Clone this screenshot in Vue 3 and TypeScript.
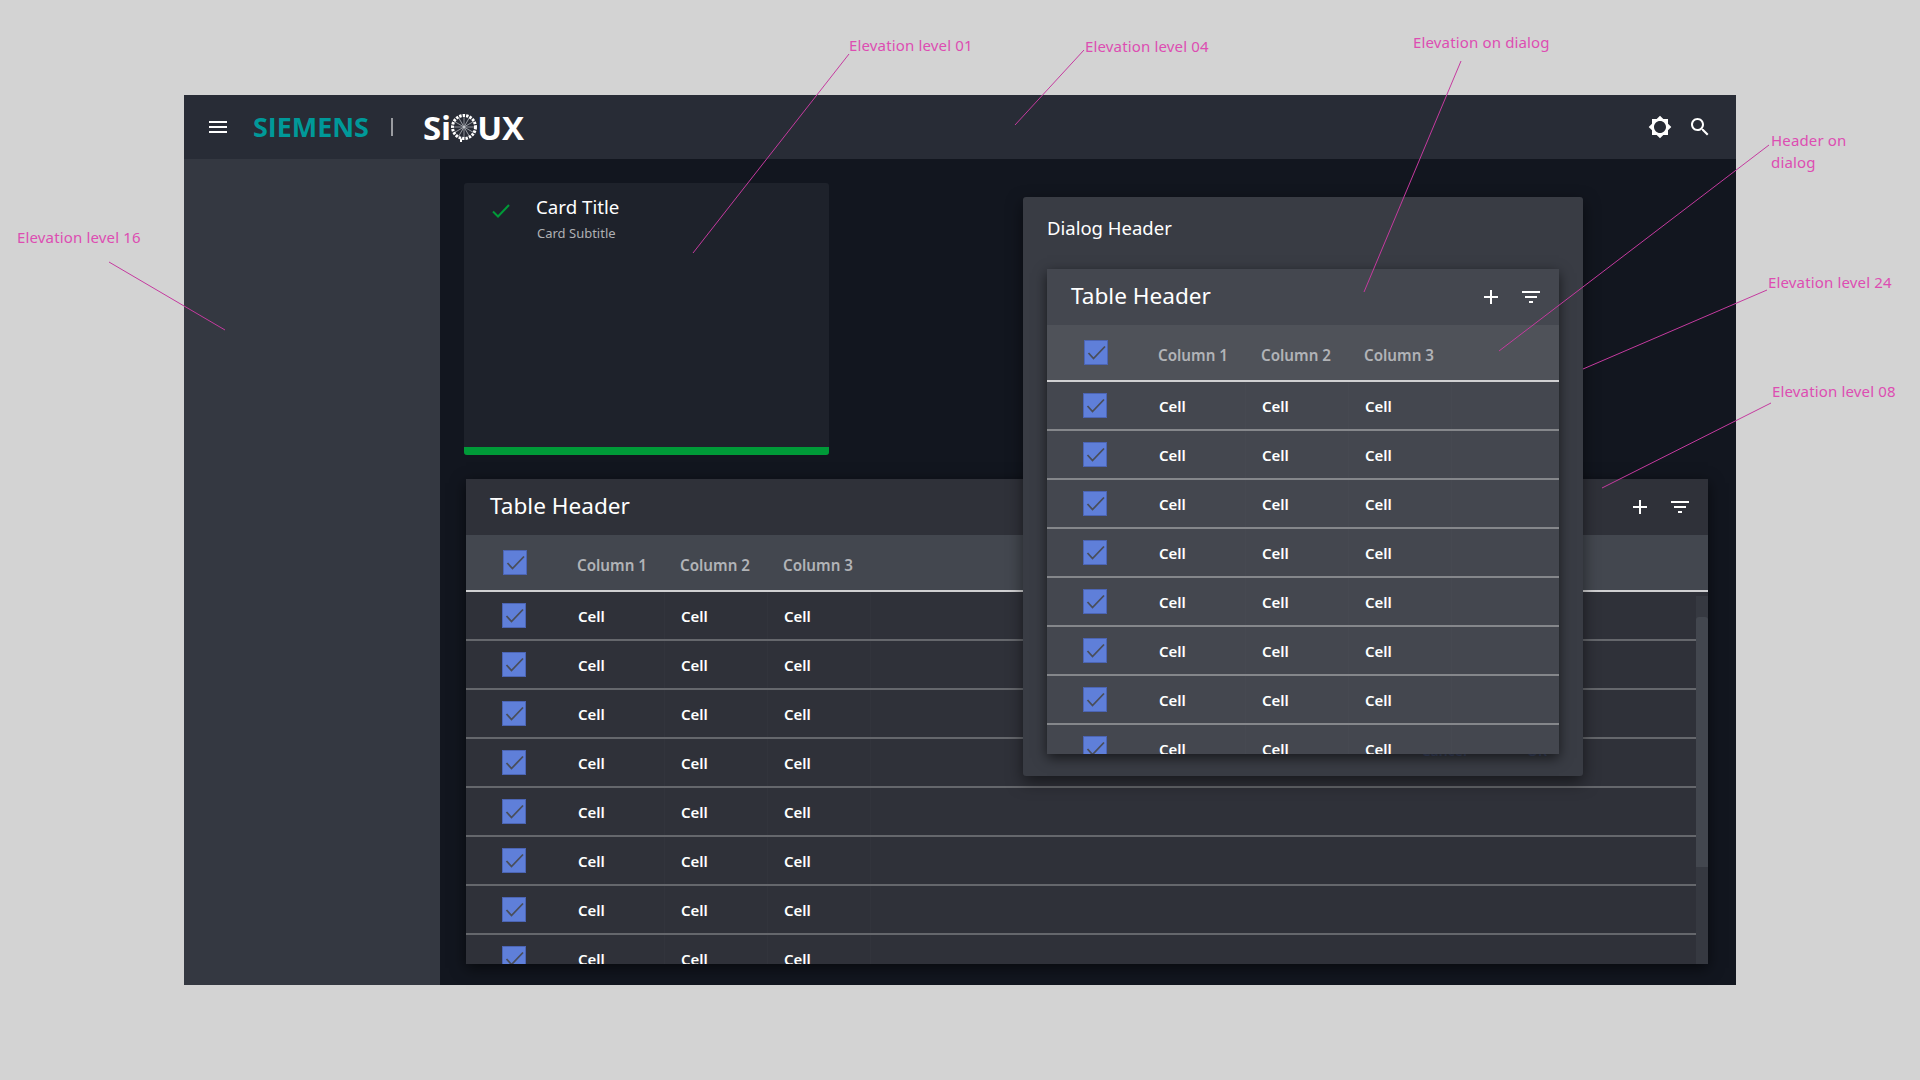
<script setup lang="ts">
const rows: number[] = [1, 2, 3, 4, 5, 6, 7, 8]
const columns: string[] = ['Column 1', 'Column 2', 'Column 3']

interface Note { text: string; x: number; y: number; w?: number }
const notes: Note[] = [
  { text: 'Elevation level 16', x: 17, y: 226 },
  { text: 'Elevation level 01', x: 849, y: 34 },
  { text: 'Elevation level 04', x: 1085, y: 35 },
  { text: 'Elevation on dialog', x: 1413, y: 31 },
  { text: 'Header on dialog', x: 1771, y: 129, w: 90 },
  { text: 'Elevation level 24', x: 1768, y: 271 },
  { text: 'Elevation level 08', x: 1772, y: 380 }
]
const lines: number[][] = [
  [109, 262, 225, 330],
  [849, 54, 693, 253],
  [1084, 50, 1015, 125],
  [1461, 61, 1364, 292],
  [1769, 145, 1499, 351],
  [1767, 290, 1583, 369],
  [1771, 403, 1602, 488]
]
const spokes: number[] = [0, 30, 60, 90, 120, 150, 180, 210, 240, 270, 300, 330]
</script>

<template>
  <div class="page">
    <div class="frame">
      <header class="topbar">
        <svg class="menu" viewBox="0 0 24 24" width="24" height="24"><path d="M3 18h18v-2H3v2zm0-5h18v-2H3v2zm0-7v2h18V6H3z" fill="#fff" /></svg>
        <span class="siemens">SIEMENS</span>
        <span class="sep"></span>
        <span class="sioux">
          <span>Si</span>
          <svg class="ring" viewBox="0 0 30 30" width="30" height="30">
            <g stroke="#cfd2d6" stroke-width="0.6">
              <line v-for="a in spokes" :key="a" x1="15" y1="14" x2="15" y2="3" :transform="`rotate(${a} 15 14)`" />
            </g>
            <circle cx="15" cy="14" r="11.5" fill="none" stroke="#fff" stroke-width="3" stroke-dasharray="2.4 1.1" />
            <path d="M12 25.5v3.5" stroke="#fff" stroke-width="2" />
          </svg>
          <span>UX</span>
        </span>
        <span class="spacer"></span>
        <svg viewBox="0 0 24 24" width="24" height="24"><path d="M20 8.69V4h-4.69L12 .69 8.69 4H4v4.69L.69 12 4 15.31V20h4.69L12 23.31 15.31 20H20v-4.69L23.31 12 20 8.69zM12 18c-3.31 0-6-2.69-6-6s2.69-6 6-6 6 2.69 6 6-2.69 6-6 6z" fill="#fff" /></svg>
        <svg viewBox="0 0 24 24" width="24" height="24"><path d="M15.5 14h-.79l-.28-.27C15.41 12.59 16 11.11 16 9.5 16 5.91 13.09 3 9.5 3S3 5.91 3 9.5 5.91 16 9.5 16c1.61 0 3.09-.59 4.23-1.57l.27.28v.79l5 4.99L20.49 19l-4.99-5zm-6 0C7.01 14 5 11.99 5 9.5S7.01 5 9.5 5 14 7.01 14 9.5 11.99 14 9.5 14z" fill="#fff" /></svg>
      </header>

      <div class="body">
        <aside class="sidebar"></aside>
        <main class="main">
          <section class="card">
            <div class="card-head">
              <svg class="card-check" viewBox="0 0 18 14" width="18" height="14"><path d="M1 7.5l5 5L17 1" fill="none" stroke="#009a38" stroke-width="2" /></svg>
              <div>
                <div class="card-title">Card Title</div>
                <div class="card-sub">Card Subtitle</div>
              </div>
            </div>
            <div class="card-bar"></div>
          </section>

          <section class="table page-table">
            <div class="t-head">
              <span class="t-title">Table Header</span>
              <span class="spacer"></span>
              <svg viewBox="0 0 24 24" width="24" height="24"><path d="M19 13h-6v6h-2v-6H5v-2h6V5h2v6h6v2z" fill="#fff" /></svg>
              <svg viewBox="0 0 24 24" width="24" height="24"><path d="M10 18h4v-2h-4v2zM3 6v2h18V6H3zm3 7h12v-2H6v2z" fill="#fff" /></svg>
            </div>
            <div class="t-cols">
              <div class="t-check"><span class="box"><svg viewBox="0 0 24 25" width="24" height="25"><path d="M4.5 13l5 5.5L21 6.5" fill="none" stroke="#4a4e59" stroke-width="1.8" /></svg></span></div>
              <div v-for="c in columns" :key="c" class="col">{{ c }}</div>
            </div>
            <div class="t-body">
              <div class="t-rows">
                <div v-for="r in rows" :key="r" class="row">
                  <div class="t-check"><span class="box"><svg viewBox="0 0 24 25" width="24" height="25"><path d="M4.5 13l5 5.5L21 6.5" fill="none" stroke="#4a4e59" stroke-width="1.8" /></svg></span></div>
                  <div v-for="c in columns" :key="c" class="cell">Cell</div>
                </div>
              </div>
              <div class="scroll"><div class="thumb"></div></div>
            </div>
          </section>

          <section class="dialog">
            <div class="d-head">Dialog Header</div>
            <div class="d-actions"><span>Cancel</span><span>OK</span></div>
            <div class="table dialog-table">
              <div class="t-head">
                <span class="t-title">Table Header</span>
                <span class="spacer"></span>
                <svg viewBox="0 0 24 24" width="24" height="24"><path d="M19 13h-6v6h-2v-6H5v-2h6V5h2v6h6v2z" fill="#fff" /></svg>
                <svg viewBox="0 0 24 24" width="24" height="24"><path d="M10 18h4v-2h-4v2zM3 6v2h18V6H3zm3 7h12v-2H6v2z" fill="#fff" /></svg>
              </div>
              <div class="t-cols">
                <div class="t-check"><span class="box"><svg viewBox="0 0 24 25" width="24" height="25"><path d="M4.5 13l5 5.5L21 6.5" fill="none" stroke="#4a4e59" stroke-width="1.8" /></svg></span></div>
                <div v-for="c in columns" :key="c" class="col">{{ c }}</div>
              </div>
              <div class="t-body">
                <div class="t-rows">
                  <div v-for="r in rows" :key="r" class="row">
                    <div class="t-check"><span class="box"><svg viewBox="0 0 24 25" width="24" height="25"><path d="M4.5 13l5 5.5L21 6.5" fill="none" stroke="#4a4e59" stroke-width="1.8" /></svg></span></div>
                    <div v-for="c in columns" :key="c" class="cell">Cell</div>
                  </div>
                </div>
              </div>
            </div>
          </section>
        </main>
      </div>
    </div>

    <svg class="overlay" width="1920" height="1080">
      <line v-for="(l, i) in lines" :key="i" :x1="l[0]" :y1="l[1]" :x2="l[2]" :y2="l[3]" stroke="#c53a9f" stroke-width="1" />
    </svg>
    <span
      v-for="n in notes"
      :key="n.text"
      class="note"
      :style="{ left: n.x + 'px', top: n.y + 'px', width: n.w ? n.w + 'px' : 'auto' }"
    >{{ n.text }}</span>
  </div>
</template>

<style>
html, body { margin: 0; background: #d3d3d3; }
</style>

<style scoped>
.page {
  position: relative;
  width: 1920px;
  height: 1080px;
  box-sizing: border-box;
  padding: 95px 184px 0;
  background: #d3d3d3;
  overflow: hidden;
  font-family: "Noto Sans", sans-serif;
}
.frame {
  width: 1552px;
  height: 890px;
  display: flex;
  flex-direction: column;
}
.topbar {
  height: 64px;
  flex: none;
  display: flex;
  align-items: center;
  gap: 16px;
  padding: 0 24px 0 22px;
  background: #282c36;
  box-sizing: border-box;
}
.siemens {
  margin-left: 7px;
  color: #009999;
  font-family: "Open Sans", sans-serif;
  font-weight: 700;
  font-size: 26.9px;
  line-height: 1;
}
.sep { width: 2px; height: 18px; margin-left: 6px; background: #9a9ca1; }
.sioux {
  margin-left: 14px;
  display: flex;
  align-items: center;
  color: #fff;
  font-family: "Open Sans", sans-serif;
  font-weight: 700;
  font-size: 33px;
  line-height: 1;
}
.ring { margin: 2px -2px 0 -2px; }
.spacer { flex: 1; }
.body { flex: 1; display: flex; min-height: 0; }
.sidebar { width: 256px; flex: none; background: #343841; }
.main {
  position: relative;
  flex: 1;
  box-sizing: border-box;
  padding: 24px 28px 21px 24px;
  display: flex;
  flex-direction: column;
  gap: 24px;
  background: #12161f;
}
.card {
  width: 365px;
  height: 272px;
  flex: none;
  display: flex;
  flex-direction: column;
  justify-content: space-between;
  background: #1e222b;
  border-radius: 3px;
  overflow: hidden;
  color: #fff;
}
.card-head { display: flex; align-items: flex-start; padding-top: 11px; }
.card-check { margin: 10px 26px 0 28px; }
.card-title { font-size: 18.7px; line-height: 26px; }
.card-sub { margin-top: 4px; padding-left: 1px; font-size: 13px; line-height: 18px; color: #aeb0b4; }
.card-bar { height: 8px; background: #009a38; }

.table {
  display: flex;
  flex-direction: column;
  overflow: hidden;
  color: #fff;
}
.page-table {
  flex: 1;
  margin-left: 2px;
  background: #2f3139;
  box-shadow: 0 4px 14px rgba(0, 0, 0, 0.6);
}
.dialog-table {
  height: 485px;
  background: #44474f;
  box-shadow: 0 4px 12px rgba(0, 0, 0, 0.6);
  position: relative;
}
.t-head {
  height: 56px;
  flex: none;
  display: flex;
  align-items: center;
  gap: 16px;
  box-sizing: border-box;
  padding: 0 16px 4px 24px;
}
.t-head svg { margin-top: 4px; }
.t-title { font-size: 22.6px; }
.t-cols {
  height: 57px;
  flex: none;
  display: flex;
  box-sizing: border-box;
  border-bottom: 2px solid #d0d0d2;
  background: #43474f;
}
.dialog-table .t-cols { background: #4f5259; }
.t-check {
  width: 96px;
  flex: none;
  box-sizing: border-box;
  padding-left: 36px;
  display: flex;
  align-items: center;
}
.t-cols .t-check { padding-left: 37px; }
.box {
  display: block;
  width: 24px;
  height: 25px;
  background: #5f7fd9;
  box-shadow: inset 0 0 0 1px rgba(60, 80, 150, 0.55);
}
.box svg { display: block; }
.col {
  width: 103px;
  box-sizing: border-box;
  padding: 4px 0 0 15px;
  display: flex;
  align-items: center;
  font-size: 15.2px;
  font-weight: 600;
  color: #b1b3b7;
}
.t-body { flex: 1; min-height: 0; display: flex; overflow: hidden; }
.t-rows { flex: 1; min-width: 0; }
.row {
  height: 49px;
  box-sizing: border-box;
  display: flex;
  border-bottom: 2px solid #65676c;
}
.dialog-table .row { border-bottom-color: #85878b; }
.cell {
  width: 103px;
  box-sizing: border-box;
  padding-left: 16px;
  display: flex;
  align-items: center;
  font-size: 15px;
  font-weight: 600;
  color: #fff;
  border-right: 1px solid rgba(255, 255, 255, 0.015);
}
.scroll { width: 12px; flex: none; margin-top: 4px; background: #363941; }
.thumb { height: 250px; margin-top: 21px; background: #43474f; border-radius: 3px 3px 0 0; }

.dialog {
  position: absolute;
  left: 583px;
  top: 38px;
  width: 560px;
  height: 579px;
  box-sizing: border-box;
  padding: 0 24px;
  background: #393c44;
  border-radius: 3px;
  box-shadow: 0 6px 16px rgba(0, 0, 0, 0.5);
  color: #fff;
}
.d-head {
  height: 72px;
  display: flex;
  align-items: center;
  padding: 0 0 12px 0;
  box-sizing: border-box;
  font-size: 18.5px;
}
.d-actions {
  position: absolute;
  right: 36px;
  top: 544px;
  display: flex;
  gap: 60px;
  font-size: 14px;
  font-weight: 600;
  color: #3f4a6a;
}
.overlay { position: absolute; left: 0; top: 0; pointer-events: none; }
.note {
  position: absolute;
  font-size: 15px;
  letter-spacing: 0.15px;
  line-height: 22px;
  color: #dd4db2;
}
</style>
